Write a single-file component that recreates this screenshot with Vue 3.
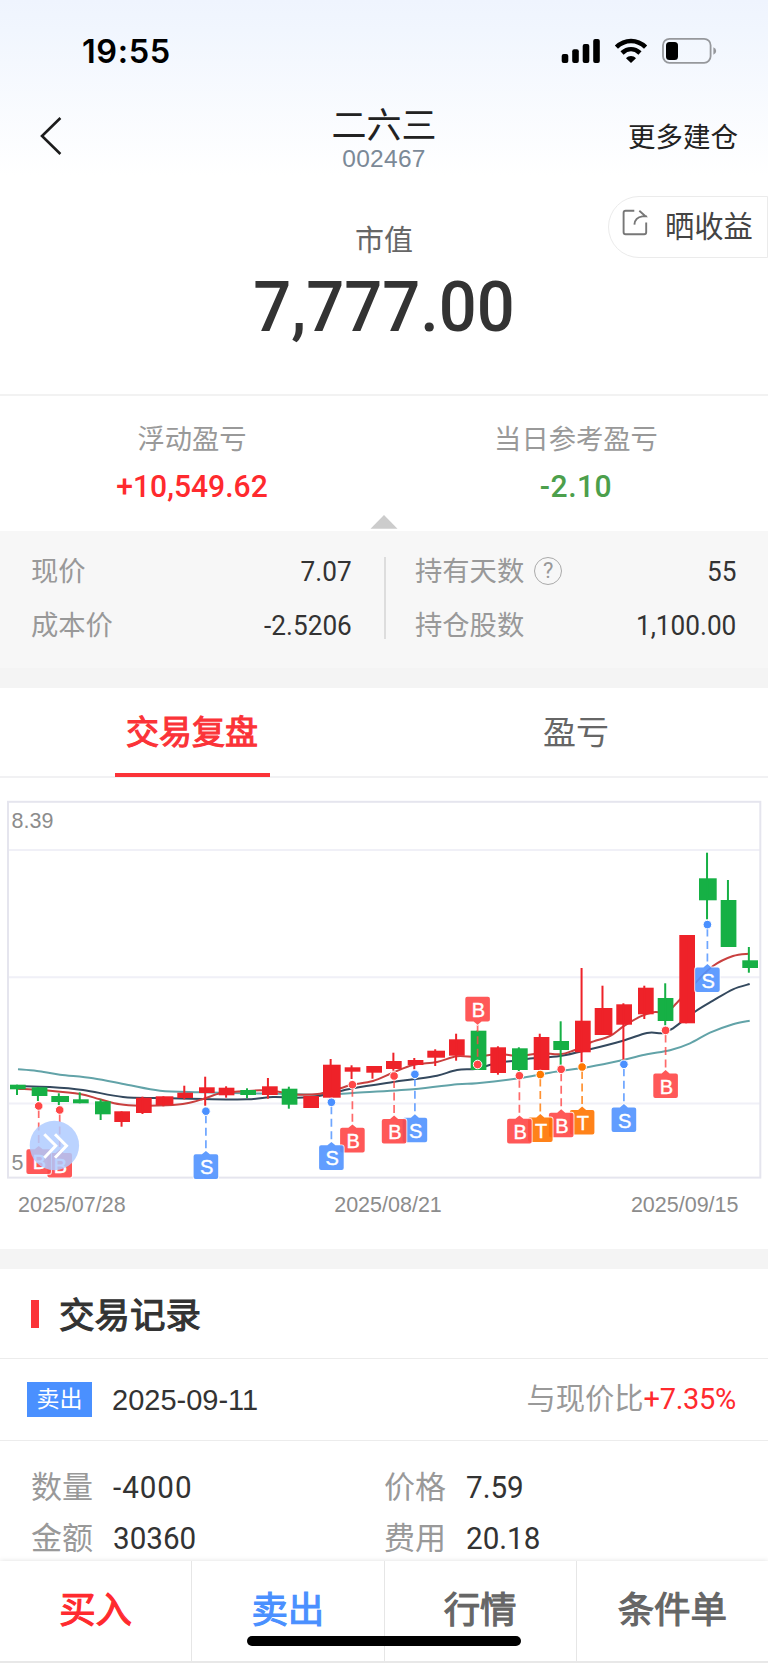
<script setup>
const UP = '#ee2229'
const DOWN = '#16b045'

// [left, width, bodyTop, bodyBottom, wickTop, wickBottom, rising]
const candles = [
  [10, 15.7, 1084.7, 1089.3, 1084.7, 1095, 0],
  [31.7, 15.7, 1087.3, 1096, 1087, 1101, 0],
  [51.3, 17.7, 1096, 1102, 1093.3, 1105, 0],
  [73, 15.7, 1099.3, 1103.3, 1092.3, 1103.3, 0],
  [95, 15.7, 1101.3, 1114.3, 1099.3, 1120, 0],
  [114.3, 15.7, 1111.3, 1122, 1111.3, 1126.7, 1],
  [136, 15.7, 1097.7, 1113, 1096.7, 1114, 1],
  [155.7, 17.7, 1096.3, 1105, 1096.3, 1106.3, 1],
  [177.3, 15.7, 1092.7, 1098, 1085.7, 1099.3, 1],
  [199, 15.7, 1087.3, 1093, 1076.7, 1105.7, 1],
  [218.7, 15.7, 1087.7, 1095.3, 1086.3, 1097.7, 1],
  [240.3, 15.7, 1090, 1095, 1088.3, 1098.3, 0],
  [262, 15.7, 1086.3, 1095, 1078, 1098.7, 1],
  [281.7, 15.7, 1088.7, 1104.7, 1086.7, 1108.7, 0],
  [303.3, 15.7, 1096, 1108, 1096, 1108, 1],
  [323, 17.7, 1064.7, 1097.7, 1059, 1097.7, 1],
  [344.7, 15.7, 1067.3, 1071.7, 1065.3, 1079, 1],
  [366.3, 15.7, 1066, 1072.7, 1066, 1078.7, 1],
  [386, 15.7, 1061, 1069, 1052.7, 1070.7, 1],
  [407.7, 15.7, 1060, 1065, 1058, 1069.3, 1],
  [427.3, 17.7, 1050.7, 1057.7, 1049.3, 1066, 1],
  [449, 15.7, 1039.3, 1055.7, 1033.7, 1060.7, 1],
  [470.7, 15.7, 1030.7, 1070, 1030.7, 1070, 0],
  [490.3, 15.7, 1047.3, 1073, 1046.3, 1074.7, 1],
  [512, 15.7, 1048.3, 1070, 1047.3, 1071.7, 0],
  [533.7, 15.7, 1037, 1070, 1033.7, 1070, 1],
  [553.3, 15.7, 1041, 1050, 1021.3, 1065, 0],
  [575, 15.7, 1020.7, 1052.3, 968, 1062.7, 1],
  [594.7, 17.7, 1008, 1035, 985.7, 1035, 1],
  [616.3, 15.7, 1004.3, 1024.7, 1003.3, 1060, 1],
  [638, 15.7, 987.7, 1014.3, 985.7, 1019, 1],
  [657.7, 15.7, 998, 1021, 983.3, 1025.3, 0],
  [679.3, 15.7, 935, 1023.3, 935, 1023.3, 1],
  [699, 17.7, 878.3, 900.3, 852.7, 919.3, 0],
  [720.7, 15.7, 900, 947, 880, 947, 0],
  [742.3, 15.7, 960.3, 968, 947, 972.7, 0],
]

const averages = [
  {
    color: '#62a3a8',
    pts: [[18, 1069.3], [37, 1071], [60, 1074.7], [93, 1078.3], [127, 1084.7], [160, 1090.7], [200, 1092.3], [247, 1093.3], [293, 1094], [320, 1095], [353, 1093], [413, 1089.3], [457, 1084.3], [477, 1083.3], [519, 1078.3], [550, 1072.7], [590, 1066.7], [623, 1060], [647, 1054.3], [670, 1050.3], [690, 1043.3], [710, 1032.7], [733, 1024.3], [749.7, 1020.7]],
  },
  {
    color: '#34495e',
    pts: [[18, 1086], [50, 1087], [83, 1090], [123, 1097], [160, 1098], [203, 1099], [247, 1099.3], [273, 1097], [297, 1097.7], [320, 1095.7], [353, 1088.3], [393, 1082], [413, 1079.3], [437, 1075.7], [457, 1070], [477, 1068.7], [497, 1062.7], [510, 1061.3], [533, 1058.3], [560, 1056], [590, 1049.3], [623, 1040.7], [647, 1033], [663, 1033], [673, 1028.3], [695, 1011.7], [713, 1000.7], [733, 989.3], [749.7, 984]],
  },
  {
    color: '#c9403f',
    pts: [[18, 1088.7], [50, 1090.7], [80, 1094], [100, 1099.3], [120, 1104.3], [140, 1105.7], [167, 1105.3], [187, 1103.3], [203, 1099], [220, 1093.3], [233, 1092], [260, 1090.3], [280, 1092], [297, 1094.7], [320, 1093.7], [340, 1088.3], [352, 1084.7], [373, 1081], [393, 1072.7], [413, 1065], [437, 1062], [457, 1056.3], [477, 1057], [497, 1054], [520, 1056], [540, 1053.3], [560, 1054.3], [573, 1050.7], [590, 1042.7], [610, 1036], [623, 1026.7], [640, 1016.7], [653, 1012.3], [667, 1011.7], [677, 1002.7], [695, 983.3], [713, 966], [733, 956], [749, 953.7]],
  },
]

// Catmull-Rom spline through the points, as cubic segments
function smooth(p) {
  let d = `M${p[0][0]} ${p[0][1]}`
  for (let i = 0; i < p.length - 1; i++) {
    const a = p[i - 1] || p[i]
    const b = p[i]
    const c = p[i + 1]
    const e = p[i + 2] || c
    d += ` C${b[0] + (c[0] - a[0]) / 6} ${b[1] + (c[1] - a[1]) / 6} ${c[0] - (e[0] - b[0]) / 6} ${c[1] - (e[1] - b[1]) / 6} ${c[0]} ${c[1]}`
  }
  return d
}

const colors = {
  B: ['#ff4646', '#ff4646'],
  S: ['#4a90ff', '#5092ff'],
  T: ['#ff7800', '#ff7400'],
}

// later markers sit underneath earlier ones
const markers = [
  { t: 'B', x: 38.7, y: 1106, top: 1149.3 },
  { t: 'B', x: 59.7, y: 1110, top: 1153 },
  { t: 'S', x: 205.9, y: 1111.2, top: 1154.3 },
  { t: 'S', x: 331.4, y: 1102.3, top: 1145.3 },
  { t: 'B', x: 352.4, y: 1084.7, top: 1127.8 },
  { t: 'B', x: 394.1, y: 1076, top: 1119 },
  { t: 'S', x: 414.9, y: 1074.3, top: 1117.7 },
  { t: 'B', x: 477.6, y: 1064.5, top: 996.8, above: true },
  { t: 'B', x: 519.4, y: 1075.7, top: 1118.8 },
  { t: 'T', x: 540.3, y: 1074.5, top: 1117.5 },
  { t: 'B', x: 561.2, y: 1069.3, top: 1112.7 },
  { t: 'T', x: 582.1, y: 1067, top: 1110 },
  { t: 'S', x: 623.9, y: 1064.3, top: 1107.5 },
  { t: 'B', x: 665.6, y: 1030.4, top: 1073.5 },
  { t: 'S', x: 707.4, y: 924.6, top: 967.5 },
].reverse()

function flag(m) {
  const l = m.x - 12.3
  const r = m.x + 12.3
  const t = m.top
  const b = t + 24.6
  if (m.above) {
    return `M${l + 2} ${t}H${r - 2}Q${r} ${t} ${r} ${t + 2}V${b - 2}Q${r} ${b} ${r - 2} ${b}H${m.x + 4}L${m.x} ${b + 3.4}L${m.x - 4} ${b}H${l + 2}Q${l} ${b} ${l} ${b - 2}V${t + 2}Q${l} ${t} ${l + 2} ${t}Z`
  }
  return `M${l + 2} ${t}H${m.x - 4}L${m.x} ${t - 3.4}L${m.x + 4} ${t}H${r - 2}Q${r} ${t} ${r} ${t + 2}V${b - 2}Q${r} ${b} ${r - 2} ${b}H${l + 2}Q${l} ${b} ${l} ${b - 2}V${t + 2}Q${l} ${t} ${l + 2} ${t}Z`
}

const nav = [
  { label: '买入', cls: 'buy' },
  { label: '卖出', cls: 'sell' },
  { label: '行情', cls: '' },
  { label: '条件单', cls: '' },
]
</script>

<template>
  <div class="page">
    <div class="top">
      <div class="status">
        <span class="time">19:55</span>
        <svg class="status-icons" width="160" height="30" viewBox="560 36 160 30">
          <rect x="561.7" y="54" width="6.6" height="9" rx="2" />
          <rect x="572.2" y="49.3" width="6.6" height="13.7" rx="2" />
          <rect x="582.7" y="44" width="6.6" height="19" rx="2" />
          <rect x="593.2" y="39" width="6.6" height="24" rx="2" />
          <g fill="none" stroke="#000" stroke-width="4.6">
            <path d="M616.4 47.2C625 39 637 39 645.6 47.2" />
            <path d="M622 53C627.5 48 634.5 48 640 53" />
          </g>
          <path d="M631 63L626 58.3C628.8 55.3 633.2 55.3 636 58.3Z" />
          <rect x="663" y="38.8" width="47.6" height="24" rx="6.5" fill="none" stroke="#96989c" stroke-width="1.8" />
          <rect x="666" y="42" width="12" height="18" rx="3.5" />
          <path d="M713.4 47.2Q716.2 48.4 716.2 51T713.4 54.8Z" fill="#96989c" />
        </svg>
      </div>
      <div class="header">
        <svg class="back" width="24" height="42" viewBox="39 115 24 42">
          <path d="M60.4 118L42 136L60.4 154" fill="none" stroke="#1c1c1c" stroke-width="2.6" />
        </svg>
        <div class="heading">
          <div class="name">二六三</div>
          <div class="code">002467</div>
        </div>
        <div class="more">更多建仓</div>
      </div>
    </div>

    <div class="value">
      <div class="value-label">市值</div>
      <div class="value-num">7,777.00</div>
      <div class="share">
        <svg width="26" height="27" viewBox="623 209 26 27" fill="none" stroke="#777" stroke-width="1.9">
          <path d="M635.3 210.8H626.6Q624.6 210.8 624.6 212.8V232.2Q624.6 234.2 626.6 234.2H645.2Q647.2 234.2 647.2 232.2V222.5" />
          <path d="M640.3 210.8L646.6 216.4H643.5Q636 217.2 635.4 224.6M642.5 216.4H648" />
        </svg>
        <span>晒收益</span>
      </div>
    </div>

    <div class="profit">
      <div class="profit-cell">
        <div class="profit-label">浮动盈亏</div>
        <div class="profit-num gain">+10,549.62</div>
      </div>
      <div class="profit-cell">
        <div class="profit-label">当日参考盈亏</div>
        <div class="profit-num loss">-2.10</div>
      </div>
      <svg class="caret" width="28" height="14" viewBox="0 0 28 14"><path d="M14 0L27.5 13.8H.5Z" fill="#ccc" /></svg>
    </div>

    <div class="detail">
      <div class="col">
        <div class="row"><span class="k">现价</span><span class="v">7.07</span></div>
        <div class="row"><span class="k">成本价</span><span class="v">-2.5206</span></div>
      </div>
      <div class="split"></div>
      <div class="col">
        <div class="row">
          <span class="k">持有天数</span><span class="help">?</span><span class="v">55</span>
        </div>
        <div class="row"><span class="k">持仓股数</span><span class="v">1,100.00</span></div>
      </div>
    </div>
    <div class="gap"></div>

    <div class="tabs">
      <div class="tab"><span class="tab-on">交易复盘</span></div>
      <div class="tab"><span>盈亏</span></div>
    </div>

    <svg class="chart" width="768" height="471" viewBox="0 778 768 471">
      <g stroke="#f0f0f7" stroke-width="2">
        <path d="M9 850H760M9 977.2H760M9 1103.4H760" />
      </g>
      <rect x="8" y="801.8" width="752.3" height="375.8" fill="none" stroke="#e5e5ee" stroke-width="2" />
      <g class="axis">
        <text x="11.5" y="827.5">8.39</text>
        <text x="11.5" y="1169.5">5</text>
        <text x="18" y="1212">2025/07/28</text>
        <text x="388" y="1212" text-anchor="middle">2025/08/21</text>
        <text x="738.5" y="1212" text-anchor="end">2025/09/15</text>
      </g>
      <path v-for="a in averages" :key="a.color" :d="smooth(a.pts)" :stroke="a.color" fill="none" stroke-width="2" />
      <g v-for="(c, i) in candles" :key="i" :fill="c[6] ? UP : DOWN">
        <rect :x="c[0]" :y="c[2]" :width="c[1]" :height="c[3] - c[2]" />
        <rect :x="17 + i * 20.91 - 1" :y="c[4]" width="2" :height="c[5] - c[4]" />
      </g>
      <g v-for="(m, i) in markers" :key="'m' + i">
        <line
          :x1="m.x" :x2="m.x" :y1="m.above ? m.top + 27 : m.y + 4" :y2="m.above ? m.y - 4 : m.top - 2"
          :stroke="colors[m.t][0]" stroke-width="1.7" stroke-dasharray="8 4.5" opacity=".8"
        />
        <path :d="flag(m)" fill="none" stroke="#fff" stroke-width="1.8" opacity=".85" />
        <path :d="flag(m)" :fill="colors[m.t][1]" opacity=".9" />
        <text class="flag-text" :x="m.x + 0.7" :y="m.top + 20">{{ m.t }}</text>
        <circle :cx="m.x" :cy="m.y" r="4.3" :fill="colors[m.t][0]" stroke="#fff" stroke-width="1" />
      </g>
      <circle cx="54.4" cy="1145.5" r="24.7" fill="#aecbff" opacity=".84" />
      <path d="M44.3 1134.3L55.8 1145.8L44.3 1157.8M55 1134.3L66.5 1145.8L55 1157.8" fill="none" stroke="#fff" stroke-width="3" />
    </svg>

    <div class="gap"></div>
    <div class="records-title"><i></i><span>交易记录</span></div>
    <div class="record-head">
      <span class="badge">卖出</span>
      <span class="date">2025-09-11</span>
      <span class="compare">与现价比<b>+7.35%</b></span>
    </div>
    <div class="record-body">
      <div class="item"><span>数量</span><b class="neg">-4000</b></div>
      <div class="item"><span>价格</span><b>7.59</b></div>
      <div class="item"><span>金额</span><b>30360</b></div>
      <div class="item"><span>费用</span><b>20.18</b></div>
    </div>

    <div class="nav">
      <div v-for="n in nav" :key="n.label" class="nav-item" :class="n.cls">{{ n.label }}</div>
      <div class="home"></div>
    </div>
  </div>
</template>

<style>
html, body { margin: 0; background: #fff; }
</style>

<style scoped>
.page {
  position: relative;
  width: 768px;
  height: 1663px;
  overflow: hidden;
  background: #fff;
  font-family: "Noto Sans CJK SC", sans-serif;
  color: #333;
}
.page * { box-sizing: border-box; }
.top { height: 176px; background: linear-gradient(#eff4fe 0, #f1f6fe 30px, #fff 176px); }
.status { height: 102px; padding: 30px 48px 0 82px; display: flex; justify-content: space-between; align-items: flex-start; }
.time { margin-top: 1px; font: 600 32.5px/42px Inter, sans-serif; color: #000; letter-spacing: .6px; }
.status-icons { margin-top: 6px; }
.header { height: 74px; padding: 0 30px 0 39px; display: grid; grid-template-columns: 200px 1fr 200px; }
.back { margin-top: 13px; }
.heading { text-align: center; margin-left: -9px; }
.name { height: 44px; font-size: 35px; line-height: 42px; color: #222; }
.code { font: 24.5px/26px "Liberation Sans", sans-serif; letter-spacing: .3px; color: #7b8997; }
.more { text-align: right; font-size: 27.5px; line-height: 66px; color: #222; white-space: nowrap; }

.value { position: relative; height: 220px; border-bottom: 2px solid #f2f2f2; text-align: center; }
.value-label { padding-top: 40px; font-size: 29px; line-height: 44px; color: #666; }
.value-num { font: 500 70.5px/84px Roboto, sans-serif; margin-top: 5px; color: #333; transform: scaleX(.948); }
.share {
  position: absolute;
  right: 0;
  top: 20px;
  width: 160px;
  height: 62px;
  display: flex;
  align-items: center;
  padding-left: 13px;
  border: 1px solid #ebebeb;
  border-radius: 31px 0 0 31px;
  font-size: 29.3px;
  color: #444;
}
.share svg { margin: -9px 17px 0 0; flex: none; }
.share span { height: 58px; line-height: 52px; white-space: nowrap; }

.profit { position: relative; height: 135px; display: flex; text-align: center; }
.profit-cell { width: 50%; padding-top: 21px; }
.profit-label { font-size: 27.3px; line-height: 40px; color: #999; }
.profit-num { font: 500 31.5px/38px Roboto, sans-serif; margin-top: 11px; transform: scaleX(.955); }
.gain { color: #ff2a2e; }
.loss { color: #4c9f4c; letter-spacing: .5px; }
.caret { position: absolute; left: 370px; bottom: 2px; }

.detail { height: 137px; background: #f7f7f7; display: flex; padding: 13px 32px 0 31px; }
.col { flex: 1; }
.row { display: flex; align-items: center; height: 54px; font-size: 27.3px; }
.k { height: 54px; line-height: 51px; color: #999; }
.v { margin: 2px 0 0 auto; font: 28px/40px Roboto, sans-serif; color: #333; transform: scaleX(.935); transform-origin: right; }
.split { width: 2px; height: 82px; margin: 13px 29px 0 32px; background: #ddd; }
.help { width: 28px; height: 28px; margin: -1px 0 0 10px; border: 1.5px solid #aaa; border-radius: 50%; font: 22px/25px Roboto, sans-serif; color: #999; text-align: center; }
.gap { height: 20px; background: #f4f4f4; }

.tabs { height: 90px; border-bottom: 2px solid #f1f1f3; display: flex; }
.tab { width: 50%; text-align: center; font-size: 33px; line-height: 84px; color: #666; }
.tab span { display: inline-block; height: 90px; }
.tab .tab-on { width: 155px; height: 89px; -webkit-text-stroke: 1.1px #fb3338; color: #fb3338; border-bottom: 4px solid #fb3338; }

.chart { display: block; }
.axis { font: 21.5px "Liberation Sans", sans-serif; fill: #8c8c8c; }
.flag-text { font: 20px "Liberation Sans", sans-serif; fill: #fff; stroke: #fff; stroke-width: .4; text-anchor: middle; }

.records-title { height: 90px; border-bottom: 1.5px solid #ececec; display: flex; align-items: center; padding: 0 0 0 31px; }
.records-title i { width: 8px; height: 28px; margin-right: 20px; background: #fb3338; }
.records-title span { height: 52px; font-size: 35.5px; line-height: 50px; -webkit-text-stroke: 1.1px #333; color: #333; }
.record-head { height: 82px; border-bottom: 1.5px solid #ececec; display: flex; align-items: center; padding: 0 32px 0 27px; }
.badge { width: 65px; height: 35px; background: #4a90ff; color: #fff; font-size: 23px; line-height: 31px; text-align: center; }
.date { margin-left: 20px; font: 29px/40px "Liberation Sans", sans-serif; color: #333; }
.compare { margin: -8px 0 0 auto; font-size: 29.3px; line-height: 40px; color: #999; white-space: nowrap; }
.compare b { font: 29px Roboto, sans-serif; letter-spacing: -.3px; color: #ff2a2e; }
.record-body { display: grid; grid-template-columns: 353px 1fr; grid-auto-rows: 51px; padding: 20px 0 0 31px; }
.item { display: flex; align-items: center; font-size: 31px; color: #999; }
.item span { height: 51px; line-height: 48px; }
.item b { margin: 2px 0 0 20px; font: 31px/40px Roboto, sans-serif; color: #333; transform: scaleX(.955); transform-origin: left; }
.item .neg { letter-spacing: 1px; }

.nav {
  position: absolute;
  left: 0;
  bottom: 0;
  width: 768px;
  height: 102px;
  display: flex;
  background: #fff;
  border-bottom: 2px solid #e8e8e8;
  box-shadow: 0 0 5px rgba(0, 0, 0, .13);
}
.nav-item { flex: 1; text-align: center; font-size: 36.5px; line-height: 94px; -webkit-text-stroke: 1.1px currentColor; color: #666; }
.nav-item + .nav-item { border-left: 1.5px solid #e6e6e6; }
.nav-item.buy { color: #ff2a2e; }
.nav-item.sell { color: #4a90ff; }
.home { position: absolute; left: 247px; top: 75px; width: 274px; height: 10px; border-radius: 5px; background: #000; }
</style>
